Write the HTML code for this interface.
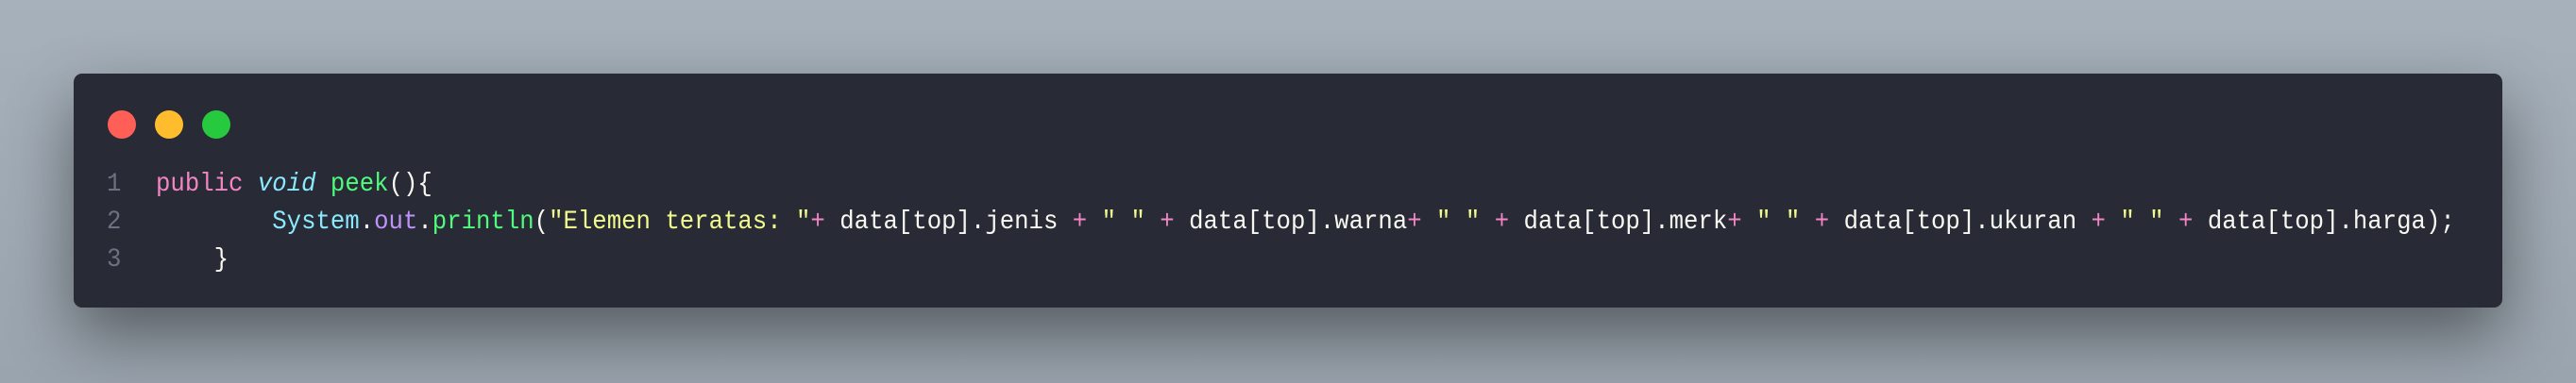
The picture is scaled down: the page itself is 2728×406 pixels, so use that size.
<!DOCTYPE html>
<html><head><style>
html,body{margin:0;padding:0}
body{width:2728px;height:406px;overflow:hidden;background:linear-gradient(180deg,#a7b1bb 0%,#9aa4ae 100%);position:relative}
.win{position:absolute;left:78px;top:78px;width:2572px;height:248px;background:#282a36;border-radius:9px;box-shadow:0 30px 70px rgba(0,0,0,0.45)}
.dot{position:absolute;top:117px;width:30px;height:30px;border-radius:50%}
.code{position:absolute;left:0;top:176px;font-family:"Liberation Mono",monospace;font-size:28px;line-height:40px;color:#f8f8f2;white-space:pre}
.ln{position:absolute;left:113px;color:#6d7080;width:20px;text-align:left;transform:scaleX(0.917);transform-origin:left}
.l{position:absolute;left:165px;transform:scaleX(0.917);transform-origin:left}
.k{color:#f286c4}.t{color:#8be9fd;font-style:italic}.f{color:#50fa7b}.c{color:#8be9fd}.p{color:#bd93f9}.s{color:#f1fa8c}
</style></head><body>
<div class="win"></div>
<div class="dot" style="left:114px;background:#ff5f56"></div>
<div class="dot" style="left:164px;background:#ffbd2e"></div>
<div class="dot" style="left:214px;background:#27c93f"></div>
<div class="code">
<div class="ln" style="top:0">1</div><div class="l" style="top:0"><span class="k">public</span> <span class="t">void</span> <span class="f">peek</span>(){</div>
<div class="ln" style="top:40px">2</div><div class="l" style="top:40px">        <span class="c">System</span>.<span class="p">out</span>.<span class="f">println</span>(<span class="s">"Elemen teratas: "</span><span class="k">+</span> data[top].jenis <span class="k">+</span> <span class="s">" "</span> <span class="k">+</span> data[top].warna<span class="k">+</span> <span class="s">" "</span> <span class="k">+</span> data[top].merk<span class="k">+</span> <span class="s">" "</span> <span class="k">+</span> data[top].ukuran <span class="k">+</span> <span class="s">" "</span> <span class="k">+</span> data[top].harga);</div>
<div class="ln" style="top:80px">3</div><div class="l" style="top:80px">    }</div>
</div>
</body></html>
